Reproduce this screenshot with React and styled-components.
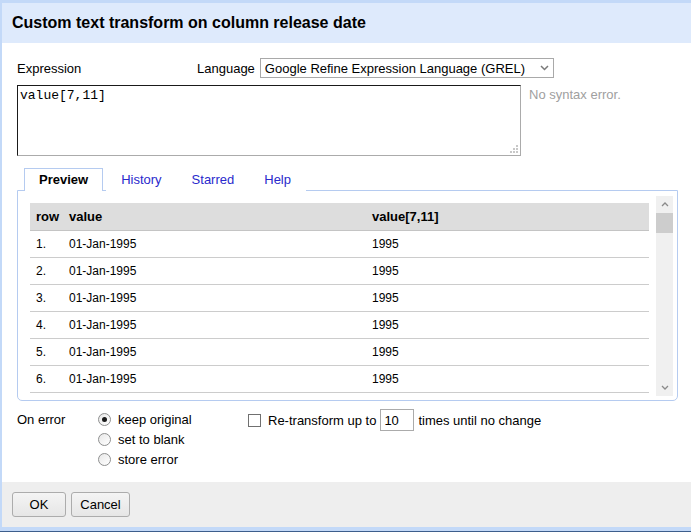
import React from "react";
import styled, { createGlobalStyle } from "styled-components";

const Global = createGlobalStyle`
  html, body { margin: 0; padding: 0; background: #3d5e8c; overflow: hidden; }
  body { font-family: "Liberation Sans", Arial, sans-serif; font-size: 13px; color: #000; }
  * { box-sizing: border-box; }
`;

const Dialog = styled.div`
  width: 691px;
  height: 531px;
  display: flex;
  flex-direction: column;
  background: #fff;
  border-top: 3px solid #c3d9f8;
  border-left: 2px solid #c3d9f8;
  border-bottom: 4px solid #c3d9f8;
`;

const Header = styled.div`
  height: 40px;
  flex: none;
  display: flex;
  align-items: center;
  padding-left: 10px;
  background: #deeafc;
  font-weight: bold;
  font-size: 16px;
`;

const Body = styled.div`
  flex: 1;
  padding: 15px 13px 0 15px;
  display: flex;
  flex-direction: column;
`;

const TopRow = styled.div`
  display: flex;
  align-items: center;
  height: 20px;
`;

const ExprLabel = styled.div`
  width: 180px;
`;

const LangLabel = styled.div`
  margin-right: 5px;
`;

const SelectBox = styled.div`
  width: 294px;
  height: 20px;
  border: 1px solid #a9a9a9;
  display: flex;
  align-items: center;
  justify-content: space-between;
  padding: 0 4px 0 4px;
  font-size: 13px;
  background: #fff;
`;

const EditorRow = styled.div`
  display: flex;
  align-items: flex-start;
  margin-top: 7px;
`;

const EditorWrap = styled.div`
  position: relative;
  width: 504px;
  height: 71px;
`;

const Editor = styled.textarea`
  width: 100%;
  height: 100%;
  resize: none;
  margin: 0;
  padding: 2px 2px;
  border-style: solid;
  border-width: 1px;
  border-color: #1a1a1a #ababab #ababab #1a1a1a;
  font-family: "Liberation Mono", "Courier New", monospace;
  font-size: 13px;
  line-height: 15px;
  color: #000;
  outline: none;
  overflow: hidden;
`;

const Grip = styled.svg`
  position: absolute;
  right: 3px;
  bottom: 3px;
`;

const Status = styled.div`
  margin-left: 8px;
  margin-top: 2px;
  color: #a0a0a0;
`;

const Tabs = styled.div`
  display: flex;
  margin-top: 12px;
  padding-left: 7px;
`;

const Tab = styled.div`
  height: 23px;
  padding: 0 ${(p) => (p.$active ? 14 : 14)}px;
  margin-right: ${(p) => (p.$active ? 3 : 0)}px;
  line-height: 21px;
  border: 1px solid ${(p) => (p.$active ? "#b5cbf0" : "transparent")};
  border-bottom: none;
  background: #fff;
  margin-bottom: -1px;
  position: relative;
  font-weight: ${(p) => (p.$active ? "bold" : "normal")};
  color: ${(p) => (p.$active ? "#000" : "#2a2acc")};
`;

const Panel = styled.div`
  border: 1px solid #b5cbf0;
  border-radius: 0 0 5px 5px;
  padding: 5px 4px 4px 12px;
`;

const ScrollArea = styled.div`
  height: 200px;
  display: flex;
  gap: 7px;
  overflow: hidden;
`;

const TableArea = styled.div`
  flex: 1;
  padding-top: 7px;
`;

const Table = styled.table`
  width: 100%;
  border-collapse: collapse;
`;

const Th = styled.th`
  text-align: left;
  font-size: 13px;
  font-weight: bold;
  background: #dddddd;
  height: 27px;
  padding: 0 0 0 6px;
  border-bottom: 1px solid #c4c4c4;
  width: ${(p) => p.$w || "auto"};
`;

const Td = styled.td`
  font-size: 12px;
  height: 27px;
  padding: 0 0 0 6px;
  border-bottom: 1px solid #cccccc;
`;

const ScrollBar = styled.div`
  width: 17px;
  flex: none;
  background: #f0f0f0;
  display: flex;
  flex-direction: column;
`;

const Arrow = styled.div`
  height: 17px;
  display: flex;
  align-items: center;
  justify-content: center;
`;

const Thumb = styled.div`
  height: 20px;
  background: #cdcdcd;
`;

const Track = styled.div`
  flex: 1;
`;

const OptionsRow = styled.div`
  display: flex;
  margin-top: 8px;
`;

const OnErrorLabel = styled.div`
  width: 81px;
  line-height: 22px;
`;

const RadioList = styled.div`
  width: 150px;
  display: flex;
  flex-direction: column;
`;

const RadioLine = styled.label`
  display: flex;
  align-items: center;
  height: 20px;
  gap: 7px;
`;

const Radio = styled.span`
  width: 13px;
  height: 13px;
  border-radius: 50%;
  border: 1px solid #8e8f8f;
  background: linear-gradient(135deg, #e8e8e8, #ffffff);
  display: flex;
  align-items: center;
  justify-content: center;
  &::after {
    content: "";
    width: 5px;
    height: 5px;
    border-radius: 50%;
    background: ${(p) => (p.$checked ? "#1a1a1a" : "transparent")};
  }
`;

const RetransformLine = styled.div`
  display: flex;
  align-items: center;
  height: 22px;
`;

const CheckBox = styled.span`
  width: 13px;
  height: 13px;
  border: 1px solid #707070;
  background: #fff;
  margin-right: 7px;
`;

const SmallInput = styled.input`
  width: 34px;
  height: 22px;
  margin: 0 4px 0 4px;
  border: 1px solid #ababab;
  padding: 0 3px;
  font-family: "Liberation Sans", Arial, sans-serif;
  font-size: 13px;
  color: #000;
  outline: none;
`;

const Footer = styled.div`
  height: 45px;
  flex: none;
  background: #eeeeee;
  display: flex;
  align-items: flex-start;
  gap: 5px;
  padding: 10px 0 0 10px;
`;

const Button = styled.button`
  height: 25px;
  width: ${(p) => p.$w}px;
  border: 1px solid #acacac;
  border-radius: 3px;
  background: linear-gradient(#f4f4f4, #e6e6e6);
  font-family: "Liberation Sans", Arial, sans-serif;
  font-size: 13px;
  color: #000;
  padding: 0;
`;

const rows = [1, 2, 3, 4, 5, 6];

export default function App() {
  return (
    <>
      <Global />
      <Dialog>
        <Header>Custom text transform on column release date</Header>
        <Body>
          <TopRow>
            <ExprLabel>Expression</ExprLabel>
            <LangLabel>Language</LangLabel>
            <SelectBox>
              <span>Google Refine Expression Language (GREL)</span>
              <svg width="9" height="6" viewBox="0 0 9 6">
                <path d="M1 1 L4.5 4.5 L8 1" fill="none" stroke="#7a7a7a" strokeWidth="1.5" />
              </svg>
            </SelectBox>
          </TopRow>
          <EditorRow>
            <EditorWrap>
              <Editor defaultValue="value[7,11]" spellCheck={false} />
              <Grip width="8" height="8" viewBox="0 0 8 8">
                <rect x="6" y="0" width="2" height="2" fill="#c8c8c8" />
                <rect x="3" y="3" width="2" height="2" fill="#c8c8c8" />
                <rect x="6" y="3" width="2" height="2" fill="#c8c8c8" />
                <rect x="0" y="6" width="2" height="2" fill="#c8c8c8" />
                <rect x="3" y="6" width="2" height="2" fill="#c8c8c8" />
                <rect x="6" y="6" width="2" height="2" fill="#c8c8c8" />
              </Grip>
            </EditorWrap>
            <Status>No syntax error.</Status>
          </EditorRow>
          <Tabs>
            <Tab $active>Preview</Tab>
            <Tab>History</Tab>
            <Tab>Starred</Tab>
            <Tab>Help</Tab>
          </Tabs>
          <Panel>
            <ScrollArea>
              <TableArea>
                <Table>
                  <thead>
                    <tr>
                      <Th $w="33px">row</Th>
                      <Th $w="303px">value</Th>
                      <Th>value[7,11]</Th>
                    </tr>
                  </thead>
                  <tbody>
                    {rows.map((r) => (
                      <tr key={r}>
                        <Td>{r}.</Td>
                        <Td>01-Jan-1995</Td>
                        <Td>1995</Td>
                      </tr>
                    ))}
                  </tbody>
                </Table>
              </TableArea>
              <ScrollBar>
                <Arrow>
                  <svg width="8" height="5" viewBox="0 0 8 5">
                    <path d="M1 4 L4 1 L7 4" fill="none" stroke="#8a8a8a" strokeWidth="1.3" />
                  </svg>
                </Arrow>
                <Thumb />
                <Track />
                <Arrow>
                  <svg width="8" height="5" viewBox="0 0 8 5">
                    <path d="M1 1 L4 4 L7 1" fill="none" stroke="#8a8a8a" strokeWidth="1.3" />
                  </svg>
                </Arrow>
              </ScrollBar>
            </ScrollArea>
          </Panel>
          <OptionsRow>
            <OnErrorLabel>On error</OnErrorLabel>
            <RadioList>
              <RadioLine>
                <Radio $checked />
                keep original
              </RadioLine>
              <RadioLine>
                <Radio />
                set to blank
              </RadioLine>
              <RadioLine>
                <Radio />
                store error
              </RadioLine>
            </RadioList>
            <RetransformLine>
              <CheckBox />
              Re-transform up to
              <SmallInput defaultValue="10" />
              times until no change
            </RetransformLine>
          </OptionsRow>
        </Body>
        <Footer>
          <Button $w={54}>OK</Button>
          <Button $w={59}>Cancel</Button>
        </Footer>
      </Dialog>
    </>
  );
}
